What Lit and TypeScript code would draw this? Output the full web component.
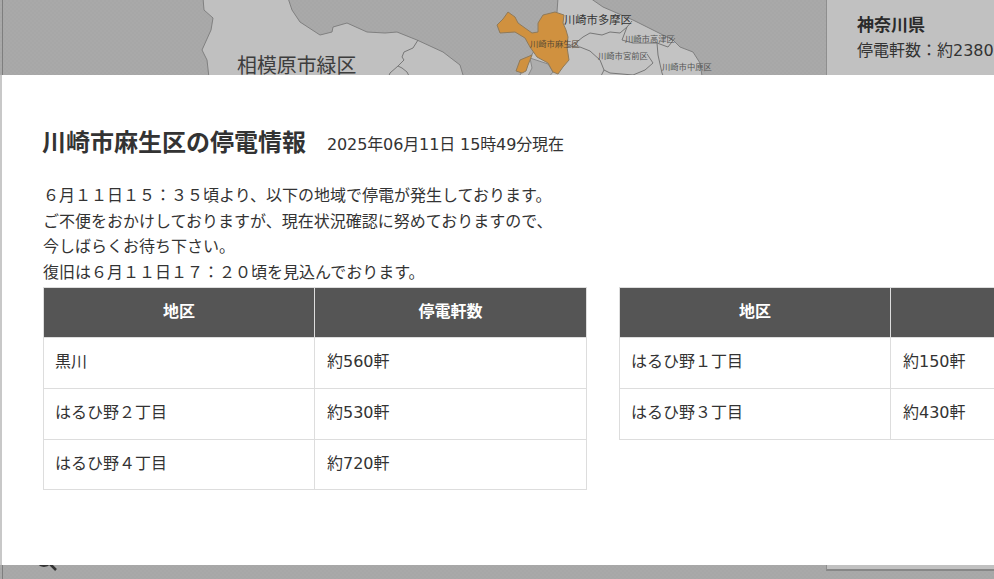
import { LitElement, html, css, svg } from "lit";
import { customElement } from "lit/decorators.js";

const orange = "497,25 503,19 508,12 515,17 518,23 525,28 532,33 538,32 538,23 543,15 555,12 564,15 563,23 566,30 568,37 567,47 569,60 563,67 558,74 553,72 548,63 537,57 530,47 525,38 515,32 500,33";
const orange2 = "516,71 520,60 532,55 528,65 526,71 522,73";

@customElement("app-root")
export class AppRoot extends LitElement {
  static styles = css`
    :host { display: block; width: 994px; height: 579px; position: relative; overflow: hidden; font-family: "DejaVu Sans", "Noto Sans CJK JP", sans-serif; color: #333; background: #a9a9a9; }
    .map { position: absolute; inset: 0; width: 994px; height: 579px; display: block; }
    .lbl { font-family: "Noto Sans CJK JP", sans-serif; fill: #444; }
    .panel { position: absolute; left: 826px; top: 0; width: 200px; height: 571px; box-sizing: border-box; background: #c1c1c1; border-left: 1px solid #8e8e8e; border-bottom: 2px solid #878787; padding: 14px 0 0 30px; }
    .panel b { display: block; font-size: 17px; line-height: 22px; color: #2b2b2b; }
    .panel p { margin: 3px 0 0; font-size: 16px; line-height: 24px; white-space: nowrap; color: #333; }
    .modal { position: absolute; left: 2px; top: 75px; width: 1240px; height: 490px; box-sizing: border-box; background: #fff; padding: 50px 0 0 41px; box-shadow: -2px 0 0 #c8c8c8; }
    .head { display: flex; align-items: center; height: 36px; }
    h2 { margin: 0 0 0 -1px; font-size: 24px; line-height: 36px; font-weight: 700; color: #333; }
    .date { margin: 0 0 0 21px; font-size: 16px; letter-spacing: -0.12px; color: #333; }
    .msg { margin: 22px 0 1px; font-size: 16px; line-height: 25.7px; color: #333; white-space: nowrap; }
    .tables { display: flex; align-items: flex-start; gap: 32px; }
    table { border-collapse: collapse; width: 544px; table-layout: fixed; font-size: 16px; }
    th { height: 50px; box-sizing: border-box; padding: 0 12px 4px; background: #555; color: #fff; font-weight: 700; border: 1px solid #ddd; text-align: center; }
    th:first-child { width: 271px; }
    td { height: 51px; box-sizing: border-box; padding: 0 12px 6px; border: 1px solid #ddd; color: #333; }
    tr:nth-child(3) td { height: 50px; padding-bottom: 5px; }
    td:first-child { padding-left: 11px; }
  `;

  render() {
    const left = [["黒川", "約560軒"], ["はるひ野２丁目", "約530軒"], ["はるひ野４丁目", "約720軒"]];
    const right = [["はるひ野１丁目", "約150軒"], ["はるひ野３丁目", "約430軒"]];
    return html`
      <svg class="map" viewBox="0 0 994 579" xmlns="http://www.w3.org/2000/svg">
        <defs>
          <pattern id="dots" width="4" height="4" patternUnits="userSpaceOnUse">
            <rect width="4" height="4" fill="#a9a9a9" />
            <rect width="2" height="2" fill="#a7a7a7" />
            <rect x="2" y="2" width="2" height="2" fill="#a7a7a7" />
          </pattern>
        </defs>
        <rect width="994" height="579" fill="url(#dots)" />
        <line x1="2.5" y1="0" x2="2.5" y2="579" stroke="#7e7e7e" />
        <polygon fill="#c0c0c0" stroke="#808080" stroke-width="1"
          points="203,-2 204,10 213,18 211,30 202,50 207,60 209,78 464,78 463,75 460,65 443,52 430,46 417,40 397,32 385,33 367,32 347,23 333,27 332,32 320,35 300,22 292,10 288,-2" />
        <polyline fill="none" stroke="#777" points="418,40 413,48 404,52 402,57 404,60 398,66 390,73 388,78" />
        <polyline fill="none" stroke="#777" points="398,66 402,68 407,72 410,78" />
        <polygon fill="#c3c3c3" stroke="#808080" stroke-width="1"
          points="558,-2 557,12 520,75 520,78 704,78 702,76 700,63 693,52 680,47 673,40 653,30 633,20 603,7 590,-2" />
        <polygon fill="#adadad" stroke="#888" points="530,58 548,64 553,72 548,78 527,78 532,68" />
        <polygon fill="#d0913f" stroke="#8f7a5a" stroke-width="1" points="${orange}" />
        <polygon fill="#d0913f" stroke="#8f7a5a" stroke-width="1" points="${orange2}" />
        ${svg`
          <polyline fill="none" stroke="#777" points="568,47 578,41 583,37 590,33 602,35 610,32 620,33 627,27 632,21" />
          <polyline fill="none" stroke="#777" points="627,27 622,40 633,43 657,43 668,47 675,38" />
          <polyline fill="none" stroke="#777" points="657,43 658,55 662,73 664,78" />
          <polyline fill="none" stroke="#777" points="568,46 580,47 590,51 600,60 604,70 610,73 633,75 645,70 653,63 647,54" />
          <polyline fill="none" stroke="#777" points="604,70 600,78" />
        `}
        <text class="lbl" x="237" y="73" font-size="19.9" style="fill:#3d3d3d">相模原市緑区</text>
        <text class="lbl" x="564" y="24" font-size="11.3" style="fill:#333">川崎市多摩区</text>
        <text class="lbl" x="530" y="47" font-size="8.3" style="fill:#5b4a33">川崎市麻生区</text>
        <text class="lbl" x="625" y="42" font-size="8.3" style="fill:#555">川崎市高津区</text>
        <text class="lbl" x="598" y="59" font-size="8.3" style="fill:#555">川崎市宮前区</text>
        <text class="lbl" x="662" y="70" font-size="8.3" style="fill:#555">川崎市中原区</text>
        <circle cx="44" cy="558" r="8" fill="none" stroke="#333" stroke-width="2" />
        <line x1="50" y1="564" x2="56" y2="570" stroke="#333" stroke-width="2.5" />
      </svg>

      <aside class="panel">
        <b>神奈川県</b>
        <p>停電軒数：約2380軒</p>
      </aside>

      <section class="modal">
        <div class="head">
          <h2>川崎市麻生区の停電情報</h2>
          <span class="date">2025年06月11日 15時49分現在</span>
        </div>
        <p class="msg">６月１１日１５：３５頃より、以下の地域で停電が発生しております。<br />ご不便をおかけしておりますが、現在状況確認に努めておりますので、<br />今しばらくお待ち下さい。<br />復旧は６月１１日１７：２０頃を見込んでおります。</p>
        <div class="tables">
          ${[left, right].map(
            (rows) => html`<table>
              <thead><tr><th>地区</th><th>停電軒数</th></tr></thead>
              <tbody>${rows.map((r) => html`<tr><td>${r[0]}</td><td>${r[1]}</td></tr>`)}</tbody>
            </table>`
          )}
        </div>
      </section>
    `;
  }
}
